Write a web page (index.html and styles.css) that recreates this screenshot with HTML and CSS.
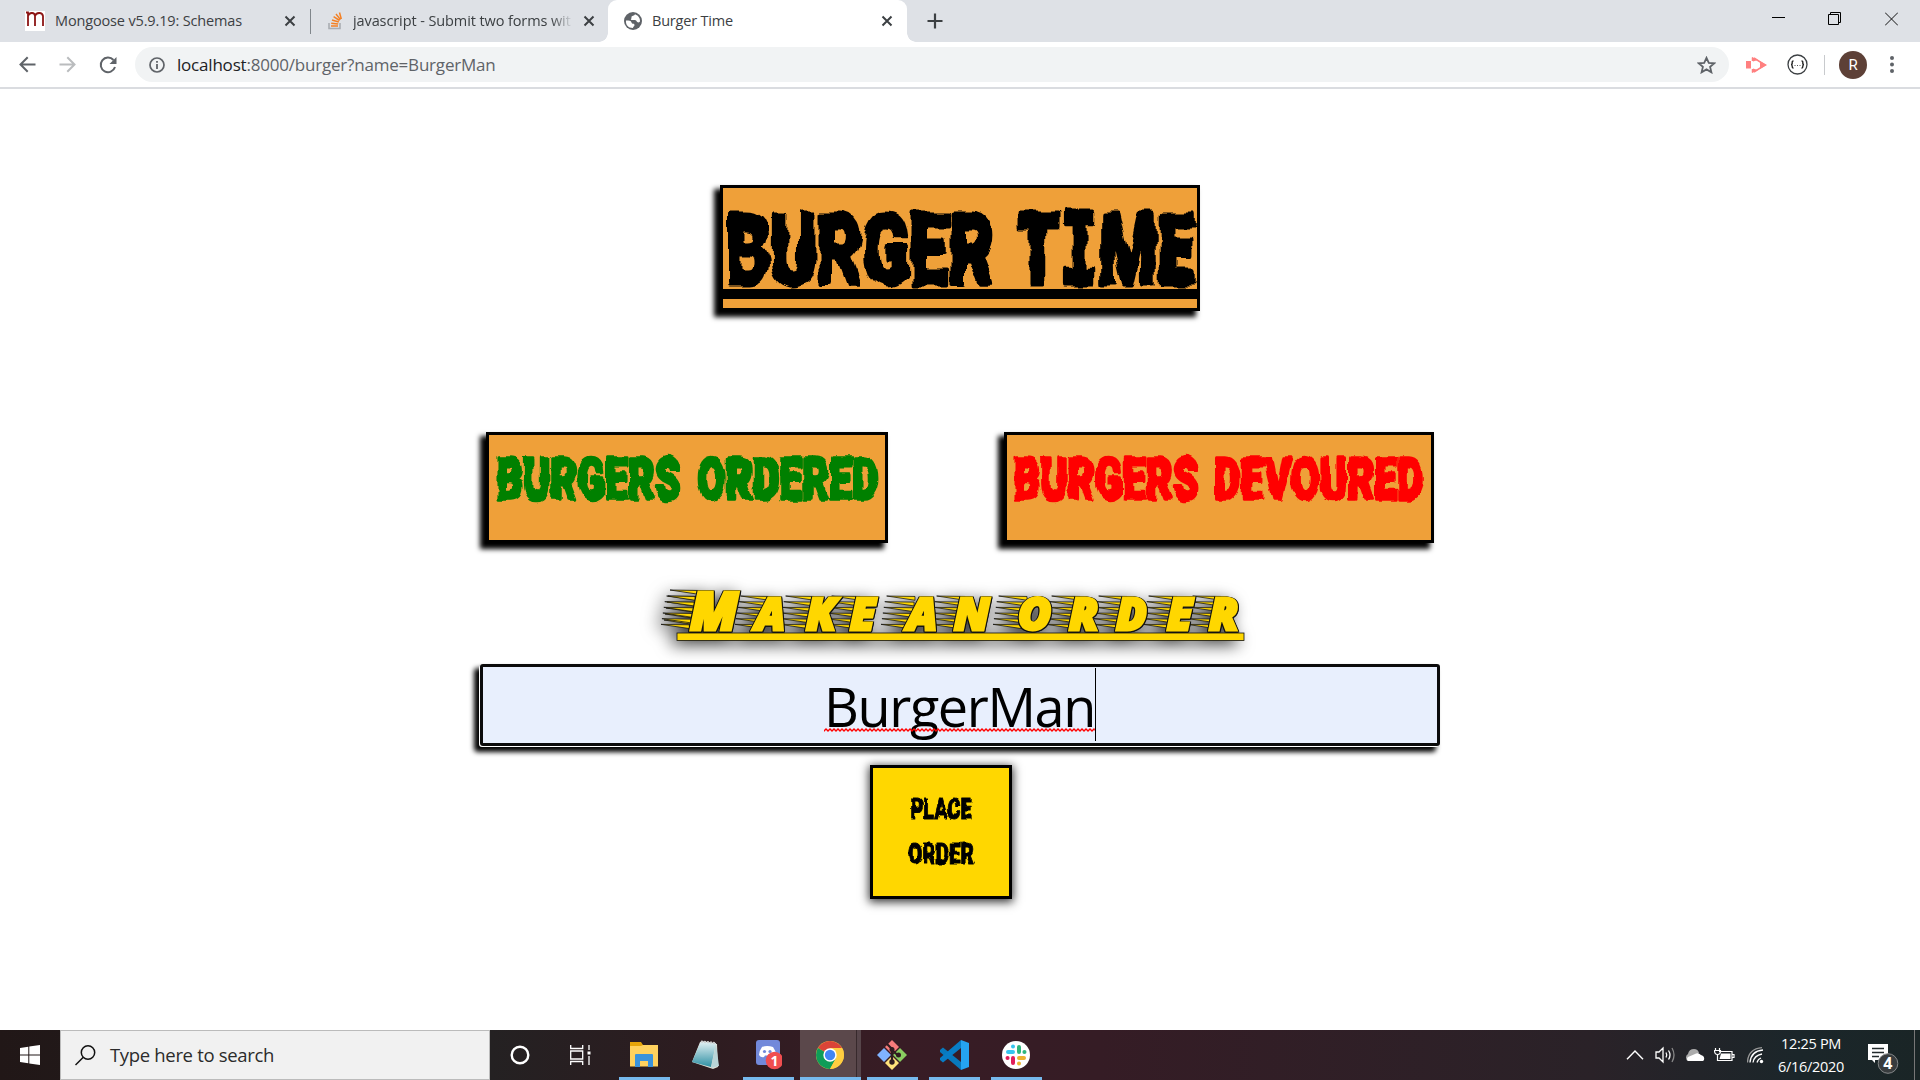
FILE: index.html
```html
<!DOCTYPE html>
<html lang="en">
<head>
<meta charset="utf-8">
<title>Burger Time</title>
<link rel="stylesheet" href="styles.css">
</head>
<body>
<svg class="defs" width="0" height="0" aria-hidden="true">
  <filter id="drip" x="-5%" y="-10%" width="110%" height="120%">
    <feTurbulence type="fractalNoise" baseFrequency="0.06 0.05" numOctaves="1" seed="4" result="n"/>
    <feDisplacementMap in="SourceGraphic" in2="n" scale="13" xChannelSelector="R" yChannelSelector="G"/>
  </filter>
  <filter id="drip-small" x="-5%" y="-10%" width="110%" height="120%">
    <feTurbulence type="fractalNoise" baseFrequency="0.1 0.08" numOctaves="1" seed="4" result="n"/>
    <feDisplacementMap in="SourceGraphic" in2="n" scale="7" xChannelSelector="R" yChannelSelector="G"/>
  </filter>
  <filter id="drip-tiny" x="-5%" y="-10%" width="110%" height="120%">
    <feTurbulence type="fractalNoise" baseFrequency="0.15" numOctaves="1" seed="4" result="n"/>
    <feDisplacementMap in="SourceGraphic" in2="n" scale="4" xChannelSelector="R" yChannelSelector="G"/>
  </filter>
  <pattern id="wave" width="4" height="4" patternUnits="userSpaceOnUse"><path d="M-1 2l1 1 2-2 2 2 1-1" fill="none" stroke="red" stroke-width="1.300"/></pattern>
  <symbol id="x" viewBox="0 0 12 12"><path d="M1.500 1.500l9 9M10.500 1.500l-9 9" stroke="#3c4043" stroke-width="2" fill="none"/></symbol>
  <symbol id="streak" viewBox="0 0 36 36" overflow="visible">
    <path d="M6 0l30 .5v4zM4 6l31 .5v4zM3 12l31 .5v4zM2 18l31 .5v4zM1 24l31 .5v4zM0 30l30 .5v4z"/>
  </symbol>
</svg>

<header class="tabs">
  <div class="tab first">
    <svg class="fav" width="20" height="20" viewBox="0 0 20 20"><rect width="20" height="20" fill="#fff"/><path d="M1 1.500h2V15M3 5c1-3.500 6.500-4.500 7 0v10M10 5c1-3.500 7-4.500 8 0v10" fill="none" stroke="#8c1515" stroke-width="1.800"/></svg>
    <span class="label l1">Mongoose v5.9.19: Schemas</span>
    <svg class="close" width="12" height="12"><use href="#x"/></svg>
  </div>
  <div class="tab second">
    <svg class="fav" width="15" height="18" viewBox="0 0 15 18"><path d="M1 11v5.500h11V11" fill="none" stroke="#a9adb2" stroke-width="1.600"/><path d="M3 14h7M3.200 11.200l7 .8M4 8l6.800 2M5.600 4.700l6 3.800M8 2l4.500 5.600M11.500.5l1.800 6.500" stroke="#f48024" stroke-width="1.500"/></svg>
    <span class="label l2">javascript - Submit two forms wit</span>
    <svg class="close" width="12" height="12"><use href="#x"/></svg>
  </div>
  <div class="tab active">
    <svg class="fav" width="18" height="18" viewBox="0 0 18 18"><circle cx="9" cy="9" r="9" fill="#5f6368"/><path d="M2 8.500c3 0 5 0 5.500 2s3 .5 3 2.500-1.500 1.200-1.500 3C4 16 1.500 12.500 2 8.500zM11 2.200c-.5 1.800-3.500 1-3.500 3s-1 1.800-.5 2.500c2 .8 4.500-.7 5.500 1.300s2.500 1.500 3.500.5C16.300 5.500 13.500 3 11 2.200z" fill="#fff"/></svg>
    <span class="label l3">Burger Time</span>
    <svg class="close" width="12" height="12"><use href="#x"/></svg>
  </div>
  <svg class="plus" width="16" height="16" viewBox="0 0 16 16"><path d="M8 .5v15M.5 8h15" stroke="#3c4043" stroke-width="2.200"/></svg>
  <div class="window-controls">
    <svg width="13" height="14"><path d="M0 5.500h13" stroke="#000"/></svg>
    <svg width="14" height="14" fill="none" stroke="#000"><path d="M.5 2.500h10v10H.5zM2.500 2.500v-2h10v10h-2"/></svg>
    <svg width="13" height="14" stroke="#111"><path d="M0 .5l13 13M13 .5L0 13.500"/></svg>
  </div>
</header>

<nav class="toolbar">
  <svg class="back" width="17" height="17" viewBox="0 0 17 17" fill="none" stroke="#5f6368" stroke-width="2"><path d="M16.500 8.500H2M8.700 1.300L1.500 8.500l7.200 7.200"/></svg>
  <svg class="forward" width="17" height="17" viewBox="0 0 17 17" fill="none" stroke="#babcbe" stroke-width="2"><path d="M.5 8.500H15M8.300 1.300l7.200 7.200-7.200 7.200"/></svg>
  <svg class="reload" width="18" height="18" viewBox="0 0 18 18"><path d="M14.500 4A7.300 7.300 0 1 0 16 11" fill="none" stroke="#5f6368" stroke-width="2"/><path d="M17.500 1v7h-7z" fill="#5f6368"/></svg>
  <div class="omnibox">
    <svg width="16" height="16" viewBox="0 0 16 16"><circle cx="8" cy="8" r="7" fill="none" stroke="#5f6368" stroke-width="1.700"/><path d="M8 7v5M8 4v1.800" stroke="#5f6368" stroke-width="1.800"/></svg>
    <span class="url"><b>localhost</b>:8000/burger?name=BurgerMan</span>
    <svg class="star" width="19" height="18" viewBox="0 0 19 18"><path d="M9.500 1.800l2.300 5 5.500.5-4.200 3.600 1.300 5.400-4.900-2.900-4.900 2.900 1.300-5.400-4.200-3.600 5.500-.5z" fill="none" stroke="#5f6368" stroke-width="1.800"/></svg>
  </div>
  <svg class="ext" width="21" height="18" viewBox="0 0 21 18"><path d="M0 5h5v7.500H0zM6 1l6 3-5 1.500zM6 17l6-3-5-1.500zM14 5l7 4-7 4z" fill="#ff8080"/><path d="M6.500 1.500V5M6.500 13v3.500M8 2l11 7-11 7" fill="none" stroke="#ff8080" stroke-width="1.500"/></svg>
  <svg class="braces" width="21" height="21" viewBox="0 0 21 21"><circle cx="10.500" cy="10.500" r="9.500" fill="#fff" stroke="#3c4043" stroke-width="1.300"/><path d="M6.500 7Q5 7 5.200 8.700T4 10.500q1.200 0 1.200 1.800T6.500 14M14.500 7q1.500 0 1.300 1.700t1.200 1.800q-1.200 0-1.200 1.800T14.500 14" fill="none" stroke="#222" stroke-width="1.400"/><path d="M7.500 11.500h1m1.500 0h1m1.500 0h1" stroke="#555"/></svg>
  <i class="divider"></i>
  <span class="avatar">R</span>
  <svg class="dots" width="4" height="17" fill="#5f6368"><circle cx="2" cy="2" r="2"/><circle cx="2" cy="8.500" r="2"/><circle cx="2" cy="15" r="2"/></svg>
</nav>

<main class="page">
  <h1 class="sign title">
    <svg width="474" height="120" class="creepy">
      <g filter="url(#drip)">
        <text x="2" y="95.500" textLength="269" lengthAdjust="spacingAndGlyphs">BURGER</text>
        <text x="294" y="95.500" textLength="178" lengthAdjust="spacingAndGlyphs">T<tspan class="slab">I</tspan>ME</text>
      </g>
      <rect x="0" y="101" width="474" height="10"/>
    </svg>
  </h1>
  <section class="lists">
    <h2 class="sign">
      <svg width="396" height="105" class="creepy small green">
        <g filter="url(#drip-small)">
          <text x="7.500" y="64" textLength="184" lengthAdjust="spacingAndGlyphs">BURGERS</text>
          <text x="208.500" y="64" textLength="181" lengthAdjust="spacingAndGlyphs">ORDERED</text>
        </g>
      </svg>
    </h2>
    <h2 class="sign">
      <svg width="424" height="105" class="creepy small red">
        <g filter="url(#drip-small)">
          <text x="6.500" y="64" textLength="185" lengthAdjust="spacingAndGlyphs">BURGERS</text>
          <text x="207" y="64" textLength="210" lengthAdjust="spacingAndGlyphs">DEVOURED</text>
        </g>
      </svg>
    </h2>
  </section>
  <h2 class="order-heading">
    <svg width="600" height="66" viewBox="655 584 600 66" class="speed">
      <g>
        <use href="#streak" x="664" y="590" width="36" height="36"/>
        <use href="#streak" x="661" y="596" width="34" height="34"/>
        <use href="#streak" x="735" y="596" width="34" height="34"/>
        <use href="#streak" x="780" y="596" width="34" height="34"/>
        <use href="#streak" x="826" y="596" width="34" height="34"/>
        <use href="#streak" x="880" y="596" width="36" height="34"/>
        <use href="#streak" x="931" y="596" width="34" height="34"/>
        <use href="#streak" x="993" y="596" width="34" height="34"/>
        <use href="#streak" x="1046" y="596" width="34" height="34"/>
        <use href="#streak" x="1093" y="596" width="34" height="34"/>
        <use href="#streak" x="1143" y="596" width="34" height="34"/>
        <use href="#streak" x="1187" y="596" width="34" height="34"/>
      </g>
      <g class="letters">
        <text y="629.500" x="690" class="cap">M</text>
        <text y="629.500" x="755 806 850 907 954 1018 1069 1116 1167 1209">AKEANORDER</text>
      </g>
      <rect x="677" y="633" width="567" height="7.500"/>
    </svg>
  </h2>
  <div class="field">
    <span class="value">BurgerMan<svg class="squiggle" height="4"><rect width="100%" height="4" fill="url(#wave)"/></svg></span><i class="caret"></i>
  </div>
  <button class="place">
    <svg width="136" height="128" class="creepy tiny">
      <g filter="url(#drip-tiny)">
        <text x="37.500" y="51" textLength="61" lengthAdjust="spacingAndGlyphs">PLACE</text>
        <text x="35" y="96" textLength="66" lengthAdjust="spacingAndGlyphs">ORDER</text>
      </g>
    </svg>
  </button>
</main>

<footer class="taskbar">
  <div class="start"><svg width="20" height="20" fill="#fff"><path d="M0 3l8.300-1.200v7.700H0zM9.300 1.600L20 0v9.500H9.300zM0 10.500h8.300v7.700L0 17zM9.300 10.500H20V20L9.300 18.400z"/></svg></div>
  <div class="search">
    <svg width="21" height="21" fill="none" stroke="#111" stroke-width="1.500"><circle cx="13" cy="7.500" r="6.700"/><path d="M8.300 12.300L.5 20"/></svg>
    <span>Type here to search</span>
  </div>
  <div class="task cortana"><svg width="20" height="20"><circle cx="10" cy="10" r="8.300" fill="none" stroke="#fff" stroke-width="2.400"/></svg></div>
  <div class="task view"><svg width="21" height="20" fill="none" stroke="#fff" stroke-width="1.300"><path d="M.7 0v3.500h12V0M.7 20v-3.500h12V20M.7 6h12v8H.7zM19 0v5M19 11v9"/><path d="M17.500 6.500h3v3h-3z" fill="#fff" stroke="none"/></svg></div>
  <div class="task open"><svg width="28" height="26"><path d="M0 0h11l2 3H28v21H0z" fill="#e5a50a"/><path d="M0 4h11l2-1h15v21.500H0z" fill="#ffd25e"/><path d="M5 13q0-1 1-1h16q1 0 1 1v12h-5v-6h-8v6H5z" fill="#3a93dc"/></svg></div>
  <div class="task"><svg width="28" height="30"><defs><linearGradient id="np" x2="0" y2="1"><stop stop-color="#e8f4f6"/><stop offset="1" stop-color="#2f90a4"/></linearGradient></defs><path d="M8 2l17 2 1 23-5 2L0 22z" fill="#dfe0d6"/><path d="M9 1l15 2-5 24L0 22z" fill="url(#np)"/><path d="M9 1.500L24 3" stroke="#ccc" stroke-width="2" stroke-dasharray="2 1"/><path d="M19 28l8-2-3-22z" fill="#b9d5d8"/></svg></div>
  <div class="task open"><svg width="28" height="32"><rect x="2" y="1" width="24" height="25" rx="3" fill="#7289da"/><path d="M8 8q5-2 11 0 3 4 3 8-2 3-5 2l-1-1.500h-5L10 18q-3 1-5-2 0-4 3-8z" fill="#fff"/><circle cx="10.500" cy="12.500" r="1.600" fill="#7289da"/><circle cx="16" cy="12.500" r="1.600" fill="#7289da"/><circle cx="20.500" cy="21.500" r="8.800" fill="#f04e50"/><text x="16.500" y="26.500" class="badge-text">1</text></svg></div>
  <div class="task current"><svg width="28" height="28" viewBox="0 0 28 28"><circle cx="14" cy="14" r="14" fill="#ffcd40"/><path d="M14 14L1.900 7A14 14 0 0 1 26.100 7z" fill="#db4437"/><path d="M1.900 7A14 14 0 0 0 14 28l6-11-6-3z" fill="#0f9d58"/><path d="M14 7h12.100A14 14 0 0 1 14 28l6-10.500z" fill="#ffcd40"/><circle cx="14" cy="14" r="6.700" fill="#fff"/><circle cx="14" cy="14" r="5.200" fill="#4285f4"/></svg></div>
  <div class="task open"><svg width="30" height="30" viewBox="0 0 30 30"><path d="M15 0l7 7-7 7-7-7z" fill="#f77b7b"/><path d="M23 8l7 7-7 7-7-7z" fill="#89ce60"/><path d="M15 16l7 7-7 7-7-7z" fill="#ffe27a"/><path d="M7 8l7 7-7 7-7-7z" fill="#80b3ff"/><path d="M10 4l5 5v13M15 10l6 5.500" stroke="#301c20" stroke-width="2.200" fill="none"/><circle cx="15" cy="9.500" r="2.500" fill="#301c20"/><circle cx="15" cy="22" r="2.700" fill="#301c20"/><circle cx="21.500" cy="15" r="2.500" fill="#301c20"/></svg></div>
  <div class="task open"><svg width="30" height="30" viewBox="0 0 30 30"><path d="M1 10l3-2.500L22 22v8L1 12z" fill="#0879bd"/><path d="M1 20l3 2.500L22 8V0L1 18z" fill="#087dc6"/><path d="M22 0l8 3v24l-8 3z" fill="#25a3f0"/></svg></div>
  <div class="task open"><svg width="28" height="28" viewBox="0 0 28 28"><circle cx="14" cy="14" r="14" fill="#fff"/><g stroke-width="4" stroke-linecap="round"><path d="M6 11h5M11 5.500v.1" stroke="#36c5f0"/><path d="M17 6v5M22.400 11h.1" stroke="#2eb67d"/><path d="M17 17h5M17 22.400v.1" stroke="#ecb22e"/><path d="M11 17v5M5.500 17h.1" stroke="#e01e5a"/></g></svg></div>
  <div class="tray">
    <svg class="chev" width="18" height="10" fill="none" stroke="#fff" stroke-width="1.400"><path d="M1 9.300L9 1l8 8.300"/></svg>
    <svg class="vol" width="21" height="18" fill="none" stroke="#fff" stroke-width="1.300"><path d="M1 6h3l4-4v14l-4-4H1zM11 6.500q1.500 2.500 0 5M13.500 4.500q3 4.500 0 9"/><path d="M17 2q4 7 0 14" stroke="#888"/></svg>
    <svg class="cloud" width="21" height="14"><path d="M4 13a4 4 0 0 1 0-7q1-5 6-5 4 0 5 4l-8 8z" fill="#ababab"/><path d="M4 13q-2-2 0-4l7-3q3-2 6 1 4 1 3 5l-1 1z" fill="#fff"/></svg>
    <svg class="battery" width="21" height="15" fill="none" stroke="#fff" stroke-width="1.200"><path d="M5 3.500h13v9H4M18 6.500h2v3h-2M1.500 0v2M5.500 0v2M.5 2.500h6q0 4-3 4t-3-4zM3.500 6v7"/><path d="M7 5.500h9.500v5.500H5.500z" fill="#fff" stroke="none"/></svg>
    <svg class="wifi" width="17" height="17" fill="none" stroke="#fff" stroke-width="1.300"><path d="M10 15.500q1-3.500 4-4.500M6 15.500q1-7 9-8.500M3 15.500Q4 4 16 3" /><path d="M.5 15.500Q1 2 15 .7" stroke="#999"/><circle cx="14.500" cy="14.500" r="1.700" fill="#fff" stroke="none"/></svg>
    <div class="clock"><span>12:25 PM</span><span>6/16/2020</span></div>
    <svg class="notice" width="32" height="32"><path d="M0 0h20v16H7v3l-3-3H0z" fill="#fff"/><path d="M4 4.500h12M4 8.500h12M4 12.500h7" stroke="#222a2c" stroke-width="1.300"/><circle cx="20" cy="19.500" r="9.800" fill="#383c3e" stroke="#858889"/><text x="15.300" y="25" class="badge-text four">4</text></svg>
    <i class="peek"></i>
  </div>
</footer>
</body>
</html>
```
FILE: styles.css
```css
* { box-sizing: border-box; }
body {
  margin: 0;
  width: 1920px;
  height: 1080px;
  overflow: hidden;
  display: flex;
  flex-direction: column;
  background: #fff;
  font-family: "Open Sans", "Noto Sans", sans-serif;
}
svg { display: block; flex: none; }
.defs { position: absolute; }
h1, h2 { margin: 0; }

/* tab strip */
.tabs { height: 42px; flex: none; display: flex; align-items: center; background: #dee1e6; color: #3c4043; font-size: 14.5px; }
.tab { display: flex; align-items: center; height: 42px; white-space: nowrap; }
.tab .label { flex: 1; overflow: hidden; line-height: 22px; }
.first { width: 310px; padding: 0 14px 0 25px; gap: 10px; }
.second { width: 298px; padding: 0 13px 0 18px; gap: 10px; background: linear-gradient(#80868b, #80868b) 0 9px / 1px 25px no-repeat; }
.l1 { letter-spacing: -0.15px; }
.l2 { letter-spacing: -0.1px; }
.second .label { -webkit-mask-image: linear-gradient(90deg, #000 90%, transparent); }
.active { width: 299px; padding: 0 14px 0 16px; gap: 10px; background: #fff; border-radius: 9px 9px 0 0; position: relative; }
.active::before, .active::after { content: ""; position: absolute; bottom: 0; width: 9px; height: 9px; }
.active::before { left: -9px; background: radial-gradient(circle at 0 0, transparent 8.5px, #fff 9px); }
.active::after { right: -9px; background: radial-gradient(circle at 100% 0, transparent 8.5px, #fff 9px); }
.l3 { letter-spacing: -0.2px; }
.plus { margin-left: 20px; }
.window-controls { margin-left: auto; display: flex; gap: 43px; padding: 0 22px 5px 0; }

/* toolbar */
.toolbar { height: 47px; flex: none; display: flex; align-items: center; border-bottom: 2px solid #dadce0; padding-left: 19px; }
.forward { margin-left: 23px; }
.reload { margin-left: 23px; }
.omnibox { margin-left: 18px; width: 1594px; height: 35px; border-radius: 18px; background: #f1f3f4; display: flex; align-items: center; padding: 0 13px 0 14px; }
.url { margin-left: 12px; flex: 1; font-size: 17px; letter-spacing: -0.2px; color: #5f6368; }
.url b { color: #202124; font-weight: 400; }
.ext { margin-left: 17px; }
.braces { margin-left: 20px; }
.divider { width: 1px; height: 20px; background: #c8cacd; margin-left: 16px; }
.avatar { margin-left: 14px; width: 28px; height: 28px; border-radius: 50%; background: #5d4037; color: #fff; font: 15px/28px Roboto, sans-serif; text-align: center; }
.dots { margin-left: 23px; }

/* page */
.page { flex: 1; display: flex; flex-direction: column; align-items: center; padding-top: 96px; }
.sign { border: 3px solid #000; background: #efa039; box-shadow: -5px 5px 5px 1px #000; }
.creepy { overflow: visible; font-family: Roboto, sans-serif; font-weight: 900; font-size: 99px; fill: #000; stroke: #000; stroke-width: 5px; stroke-linejoin: round; }
.creepy rect { stroke: none; }
.slab { font-family: "DejaVu Sans Mono", monospace; font-weight: 700; }
.small { font-size: 58px; stroke-width: 3.5px; }
.green { fill: green; stroke: green; }
.red { fill: red; stroke: red; }
.tiny { font-size: 29px; stroke-width: 1px; }
.lists { display: flex; gap: 116px; margin-top: 121px; }
.order-heading { margin: 41px 0 14px -10px; }
.speed { overflow: visible; font-family: "Open Sans", sans-serif; font-style: italic; font-weight: 800; font-size: 45px; fill: gold; stroke: #111; stroke-width: .8px; filter: drop-shadow(-6px 4px 8px rgba(0, 0, 0, .75)); }
.letters { stroke: gold; stroke-width: 3px; filter: drop-shadow(1px 0 0 #111) drop-shadow(-1px 0 0 #111) drop-shadow(0 1px 0 #111); }
.cap { font-size: 53px; }
.field { width: 960px; height: 82px; border: 3px solid #0b0b0b; border-radius: 3px; background: #e8effd; box-shadow: -1px 1px 0 #fff, -5px 5px 5px 1px #000; display: flex; justify-content: center; }
.value { position: relative; font-size: 54px; line-height: 79px; letter-spacing: -1.4px; }
.squiggle { position: absolute; left: 0; top: 61px; width: 100%; }
.caret { width: 1px; height: 73px; margin-top: 1px; background: #000; }
.place { margin: 19px 0 0 -38px; padding: 0; border: 3px solid #000; background: gold; box-shadow: 0 2px 9px 1px #333; }

/* taskbar */
.taskbar { height: 50px; flex: none; display: flex; background: linear-gradient(90deg, #211717 0, #242122 490px, #2d1c20 700px, #381c25 900px, #351c25 1100px, #2a2228 1590px, #1b262a 1800px, #1a2526); color: #fff; }
.start { width: 60px; display: grid; place-items: center; }
.search { width: 430px; border: 1px solid #bbb; background: #f1f1f1; display: flex; align-items: center; padding-left: 14px; gap: 14px; color: #2b2b2b; font-size: 18.5px; letter-spacing: -0.33px; }
.search span { padding-bottom: 2px; }
.task { width: 62px; display: grid; place-items: center; }
.cortana { width: 60px; }
.view { width: 61px; margin-right: 2px; }
.open { background: linear-gradient(#76b9ed, #76b9ed) center bottom / 51px 3px no-repeat; }
.current { background: linear-gradient(#76b9ed, #76b9ed) 1px 47px / 61px 3px no-repeat, linear-gradient(90deg, transparent 1px, #5b484b 1px, #5b484b 57px, #37292c 57px, #37292c 58px, #56454a 58px); }
.badge-text { font: 700 14px "Open Sans", sans-serif; fill: #fff; }
.four { font-size: 16px; }
.tray { margin-left: auto; display: flex; align-items: center; }
.vol { margin-left: 11px; }
.cloud { margin-left: 8px; }
.battery { margin-left: 9px; }
.wifi { margin-left: 12px; }
.clock { width: 76px; margin-left: 9px; display: flex; flex-direction: column; align-items: center; font-size: 14.5px; line-height: 23px; letter-spacing: -0.3px; }
.notice { margin: 10px 0 0 19px; }
.peek { width: 1px; height: 50px; background: #777; margin: 0 5px 0 14px; }
```
